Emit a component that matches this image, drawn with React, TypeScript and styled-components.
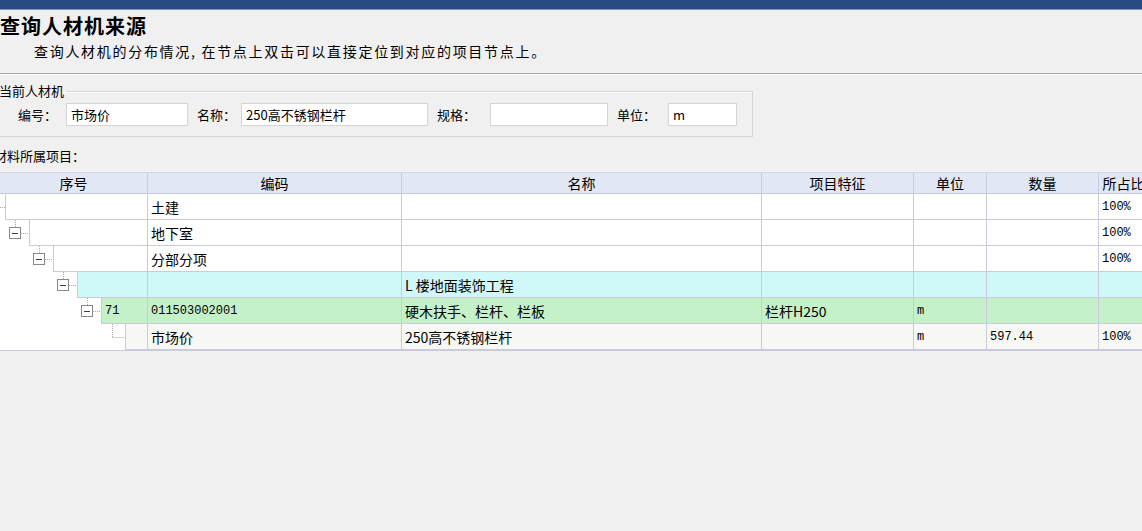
import React from "react";
import styled, { createGlobalStyle } from "styled-components";

const Global = createGlobalStyle`
  html, body { margin: 0; padding: 0; background: #f0f0f0; overflow: hidden; }
  body { font-family: "Noto Sans CJK SC", "Noto Sans", sans-serif; color: #000; }
  * { box-sizing: border-box; }
`;

const Page = styled.div`
  width: 1142px;
  height: 531px;
  overflow: hidden;
  display: flex;
  flex-direction: column;
`;

const TopBar = styled.div`
  height: 10px;
  flex: none;
  background: #284a80;
  border-bottom: 1px solid #7f97bd;
`;

const Title = styled.h1`
  margin: 3px 0 0 0;
  font-size: 20px;
  line-height: 26px;
  font-weight: 700;
  letter-spacing: 1px;
  font-family: "Noto Sans CJK SC", sans-serif;
`;

const Subtitle = styled.div`
  margin-top: 3px;
  padding-left: 34px;
  font-size: 14px;
  line-height: 18px;
  letter-spacing: 1.7px;
`;

const Separator = styled.div`
  margin-top: 13px;
  height: 2px;
  border-top: 1px solid #a9a9a9;
  border-bottom: 1px solid #ffffff;
  flex: none;
`;

const Group = styled.fieldset`
  margin: 8px 0 0 -10px;
  padding: 0;
  width: 763px;
  min-inline-size: 0;
  border: 1px solid #d6d6d6;
  box-shadow: inset 1px 1px 0 #fafafa;
`;

const GroupTitle = styled.legend`
  margin-left: 8px;
  padding: 0 2px 0 0;
  font-size: 13px;
  line-height: 16px;
`;

const FieldRow = styled.div`
  display: flex;
  align-items: center;
  padding: 4px 0 10px 27px;
`;

const Label = styled.label<{ $w: number; $first?: boolean }>`
  width: ${(p) => p.$w}px;
  padding-left: ${(p) => (p.$first ? 0 : 9)}px;
  font-size: 13px;
  line-height: 23px;
  flex: none;
  white-space: nowrap;
`;

const Input = styled.div<{ $w: number }>`
  width: ${(p) => p.$w}px;
  height: 23px;
  flex: none;
  background: #fff;
  border: 1px solid #d4d4d4;
  font-size: 13px;
  line-height: 21px;
  padding-left: 4px;
  white-space: nowrap;
  overflow: hidden;
`;

const SectionLabel = styled.div`
  margin: 11px 0 0 -6px;
  font-size: 13px;
  line-height: 16px;
`;

const cols = "148px 254px 360px 152px 73px 112px 64px";

const Table = styled.div`
  margin-top: 8px;
  width: 1163px;
  flex: none;
  border-bottom: 1px solid #c9cbdc;
`;

const HeadRow = styled.div`
  display: grid;
  grid-template-columns: ${cols};
  height: 22px;
  background: #e1e7f4;
  border-top: 1px solid #d3d8e6;
  border-bottom: 1px solid #c6cbe0;
`;

const HeadCell = styled.div`
  display: flex;
  align-items: center;
  justify-content: center;
  font-size: 14px;
  line-height: 20px;
  white-space: nowrap;
  overflow: hidden;
  border-right: 1px solid #c6cde2;
`;

const BodyRow = styled.div<{ $bg: string }>`
  display: grid;
  grid-template-columns: ${cols};
  height: 26px;
  --row-bg: ${(p) => p.$bg};
`;

const Cell = styled.div<{ $mono?: boolean }>`
  display: flex;
  align-items: center;
  padding-left: 3px;
  background: var(--row-bg);
  border-right: 1px solid #c9cbdc;
  border-bottom: 1px solid #c9cbdc;
  font-size: ${(p) => (p.$mono ? 12 : 14)}px;
  font-family: ${(p) =>
    p.$mono
      ? `"Liberation Mono", "Noto Sans CJK SC", monospace`
      : `"Noto Sans CJK SC", "Liberation Sans", sans-serif`};
  white-space: nowrap;
  overflow: hidden;
`;

const TreeCell = styled.div`
  display: flex;
  border-right: 1px solid #c9cbdc;
  background: #fff;
`;

const Gutter = styled.div<{ $w: number }>`
  width: ${(p) => p.$w}px;
  flex: none;
  display: flex;
  justify-content: flex-end;
`;

const TreeBody = styled.div`
  flex: 1;
  display: flex;
  align-items: center;
  padding-left: 3px;
  background: var(--row-bg);
  border-left: 1px solid #c9cbdc;
  border-bottom: 1px solid #c9cbdc;
  font-size: 12px;
  font-family: "Liberation Mono", "Noto Sans CJK SC", monospace;
`;

const dot = { stroke: "#a8a8a8", strokeDasharray: "1 1", strokeWidth: 1 } as const;

function Connector({ kind }: { kind: "root" | "box" | "leaf" }) {
  if (kind === "root") {
    return (
      <svg width="5" height="26">
        <line x1="0" y1="13.5" x2="5" y2="13.5" {...dot} />
      </svg>
    );
  }
  if (kind === "leaf") {
    return (
      <svg width="24" height="26">
        <line x1="11.5" y1="0" x2="11.5" y2="13" {...dot} />
        <line x1="11.5" y1="13.5" x2="24" y2="13.5" {...dot} />
      </svg>
    );
  }
  return (
    <svg width="24" height="26">
      <line x1="10.5" y1="0" x2="10.5" y2="7" {...dot} />
      <rect x="4.5" y="7.5" width="11" height="11" fill="#fff" stroke="#8a8a8a" />
      <line x1="7" y1="13.5" x2="13" y2="13.5" stroke="#404040" />
      <line x1="16" y1="13.5" x2="24" y2="13.5" {...dot} />
    </svg>
  );
}

type RowData = {
  level: number;
  kind: "root" | "box" | "leaf";
  bg: string;
  seq: string;
  code: string;
  name: string;
  feat: string;
  unit: string;
  qty: string;
  pct: string;
};

const rows: RowData[] = [
  { level: 0, kind: "root", bg: "#ffffff", seq: "", code: "土建", name: "", feat: "", unit: "", qty: "", pct: "100%" },
  { level: 1, kind: "box", bg: "#ffffff", seq: "", code: "地下室", name: "", feat: "", unit: "", qty: "", pct: "100%" },
  { level: 2, kind: "box", bg: "#ffffff", seq: "", code: "分部分项", name: "", feat: "", unit: "", qty: "", pct: "100%" },
  { level: 3, kind: "box", bg: "#d0f8f9", seq: "", code: "", name: "L 楼地面装饰工程", feat: "", unit: "", qty: "", pct: "" },
  { level: 4, kind: "box", bg: "#c5f1c9", seq: "71", code: "011503002001", name: "硬木扶手、栏杆、栏板", feat: "栏杆H250", unit: "m", qty: "", pct: "" },
  { level: 5, kind: "leaf", bg: "#f7f7f3", seq: "", code: "市场价", name: "250高不锈钢栏杆", feat: "", unit: "m", qty: "597.44", pct: "100%" },
];

const headers = ["序号", "编码", "名称", "项目特征", "单位", "数量", "所占比例"];

export default function App() {
  return (
    <Page>
      <Global />
      <TopBar />
      <Title>查询人材机来源</Title>
      <Subtitle>查询人材机的分布情况, 在节点上双击可以直接定位到对应的项目节点上。</Subtitle>
      <Separator />
      <Group>
        <GroupTitle>当前人材机</GroupTitle>
        <FieldRow>
          <Label $w={48} $first>编号：</Label>
          <Input $w={122}>市场价</Input>
          <Label $w={53}>名称：</Label>
          <Input $w={187}>250高不锈钢栏杆</Input>
          <Label $w={62}>规格：</Label>
          <Input $w={118} />
          <Label $w={60}>单位：</Label>
          <Input $w={69}>m</Input>
        </FieldRow>
      </Group>
      <SectionLabel>材料所属项目：</SectionLabel>
      <Table>
        <HeadRow>
          {headers.map((h) => (
            <HeadCell key={h}>{h}</HeadCell>
          ))}
        </HeadRow>
        {rows.map((r, i) => (
          <BodyRow key={i} $bg={r.bg}>
            <TreeCell>
              <Gutter $w={5 + 24 * r.level}>
                <Connector kind={r.kind} />
              </Gutter>
              <TreeBody>{r.seq}</TreeBody>
            </TreeCell>
            <Cell $mono={/^\d/.test(r.code)}>{r.code}</Cell>
            <Cell>{r.name}</Cell>
            <Cell>{r.feat}</Cell>
            <Cell $mono>{r.unit}</Cell>
            <Cell $mono>{r.qty}</Cell>
            <Cell $mono>{r.pct}</Cell>
          </BodyRow>
        ))}
      </Table>
    </Page>
  );
}
